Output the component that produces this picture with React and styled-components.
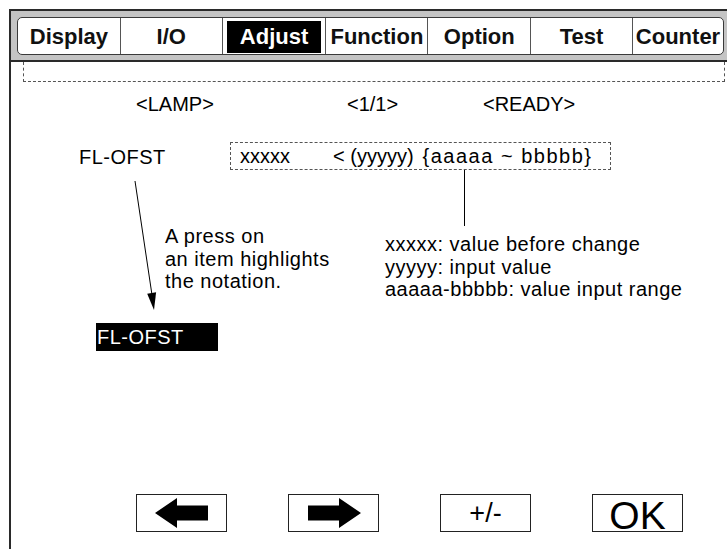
import React from 'react';
import styled, { createGlobalStyle } from 'styled-components';

const GlobalStyle = createGlobalStyle`
  html, body {
    margin: 0;
    padding: 0;
    background: #fff;
    overflow: hidden;
  }
  body {
    font-family: "Liberation Sans", Arial, sans-serif;
    color: #000;
  }
`

const Frame = styled.div`
  margin: 9px 0 0 9px;
  width: 730px;
  height: 560px;
  border-left: 2px solid #2a2a2a;
  border-top: 2px solid #2a2a2a;
  display: flex;
  flex-direction: column;
`

const Header = styled.div`
  background: #c4c4c4;
  padding: 6px 0 5px 6px;
  border-bottom: 2px solid #2a2a2a;
`

const TabBar = styled.div`
  display: flex;
  width: 707px;
  height: 38px;
  background: #fff;
  border: 1px solid #3a3a3a;
  border-radius: 5px;
  box-sizing: border-box;
`

const Tab = styled.div`
  width: ${p => p.w}px;
  display: flex;
  align-items: stretch;
  justify-content: center;
  padding: 3px 4px 1px 4px;
  box-sizing: border-box;
  border-right: ${p => (p.last ? 'none' : '1px solid #555')};
  font-size: 22px;
  font-weight: bold;
  color: #111;
`

const TabLabel = styled.span`
  display: flex;
  align-items: center;
  justify-content: center;
  flex: ${p => (p.active ? 1 : 'none')};
  background: ${p => (p.active ? '#000' : 'transparent')};
  color: ${p => (p.active ? '#fff' : '#111')};
`

const Canvas = styled.div`
  flex: 1;
  display: flex;
  flex-direction: column;
  font-size: 20px;
`

const DashedStrip = styled.div`
  margin-left: 12px;
  width: 700px;
  height: 19px;
  border: 1px dashed #555;
  border-top: none;
`

const StatusRow = styled.div`
  display: grid;
  grid-template-columns: 211px 136px auto;
  padding-left: 125px;
  margin-top: 11px;
  line-height: 22px;
`

const FieldRow = styled.div`
  display: flex;
  align-items: center;
  margin-top: 27px;
  padding-left: 68px;
`

const FieldLabel = styled.div`
  width: 151px;
  padding-top: 2px;
  letter-spacing: 0.5px;
`

const ValueBox = styled.div`
  display: flex;
  align-items: center;
  height: 28px;
  box-sizing: border-box;
  width: 381px;
  padding: 1px 0 0 9px;
  border: 1px dashed #555;
`

const ValuePart = styled.span`
  margin-left: ${p => p.gap || 0}px;
  letter-spacing: ${p => p.spread || 0}px;
  white-space: pre;
`

const AnnotationRow = styled.div`
  display: flex;
  padding-left: 119px;
`

const LeftCol = styled.div`
  width: 255px;
  display: flex;
`

const Note = styled.div`
  margin-top: 55px;
  margin-left: 5px;
  line-height: 22.5px;
  letter-spacing: 0.5px;
`

const RightCol = styled.div`
  display: flex;
  flex-direction: column;
`

const Connector = styled.div`
  width: 1px;
  height: 56px;
  margin-left: 79px;
  background: #000;
`

const Legend = styled.div`
  margin-top: 7px;
  line-height: 22.5px;
  letter-spacing: 0.5px;
`

const Highlight = styled.div`
  margin: 11px 0 0 85px;
  width: 122px;
  height: 28px;
  box-sizing: border-box;
  padding: 1px 0 0 1px;
  display: flex;
  align-items: center;
  background: #000;
  color: #fff;
  letter-spacing: 0.5px;
`

const ButtonRow = styled.div`
  display: flex;
  gap: 61px;
  margin-top: 143px;
  padding-left: 125px;
`

const Key = styled.div`
  width: 91px;
  height: 38px;
  box-sizing: border-box;
  border: 1px solid #222;
  display: flex;
  align-items: center;
  justify-content: center;
  font-size: ${p => p.size || 26}px;
  line-height: 1;
  padding-top: ${p => p.shift || 0}px;
`

const ArrowIcon = ({ dir }) => (
  <svg width="54" height="30" viewBox="0 0 54 30">
    <polygon
      points="0,15 22,0 22,7.5 53,7.5 53,22.5 22,22.5 22,30"
      fill="#000"
      transform={dir === 'right' ? 'translate(54,0) scale(-1,1)' : undefined}
    />
  </svg>
)

const tabs = [
  { label: 'Display', w: 103 },
  { label: 'I/O', w: 102 },
  { label: 'Adjust', w: 104, active: true },
  { label: 'Function', w: 102 },
  { label: 'Option', w: 103 },
  { label: 'Test', w: 102 },
  { label: 'Counter', w: 90, last: true },
]

export default function App() {
  return (
    <>
      <GlobalStyle />
      <Frame>
        <Header>
          <TabBar>
            {tabs.map(t => (
              <Tab key={t.label} w={t.w} last={t.last}>
                <TabLabel active={t.active}>{t.label}</TabLabel>
              </Tab>
            ))}
          </TabBar>
        </Header>
        <Canvas>
          <DashedStrip />
          <StatusRow>
            <span>&lt;LAMP&gt;</span>
            <span>&lt;1/1&gt;</span>
            <span>&lt;READY&gt;</span>
          </StatusRow>
          <FieldRow>
            <FieldLabel>FL-OFST</FieldLabel>
            <ValueBox>
              <ValuePart>xxxxx</ValuePart>
              <ValuePart gap={43}>&lt; (yyyyy)</ValuePart>
              <ValuePart gap={9} spread={1.5}>{'{aaaaa ~ bbbbb}'}</ValuePart>
            </ValueBox>
          </FieldRow>
          <AnnotationRow>
            <LeftCol>
              <svg width="30" height="142" viewBox="0 0 30 142">
                <line x1="5" y1="11" x2="22" y2="125" stroke="#000" strokeWidth="1" />
                <polygon points="24,140 26.1,122.3 17.2,123.7" fill="#000" />
              </svg>
              <Note>
                A press on<br />
                an item highlights<br />
                the notation.
              </Note>
            </LeftCol>
            <RightCol>
              <Connector />
              <Legend>
                xxxxx: value before change<br />
                yyyyy: input value<br />
                aaaaa-bbbbb: value input range
              </Legend>
            </RightCol>
          </AnnotationRow>
          <Highlight>FL-OFST</Highlight>
          <ButtonRow>
            <Key><ArrowIcon dir="left" /></Key>
            <Key><ArrowIcon dir="right" /></Key>
            <Key size={27}>+/-</Key>
            <Key size={39} shift={4}>OK</Key>
          </ButtonRow>
        </Canvas>
      </Frame>
    </>
  )
}
